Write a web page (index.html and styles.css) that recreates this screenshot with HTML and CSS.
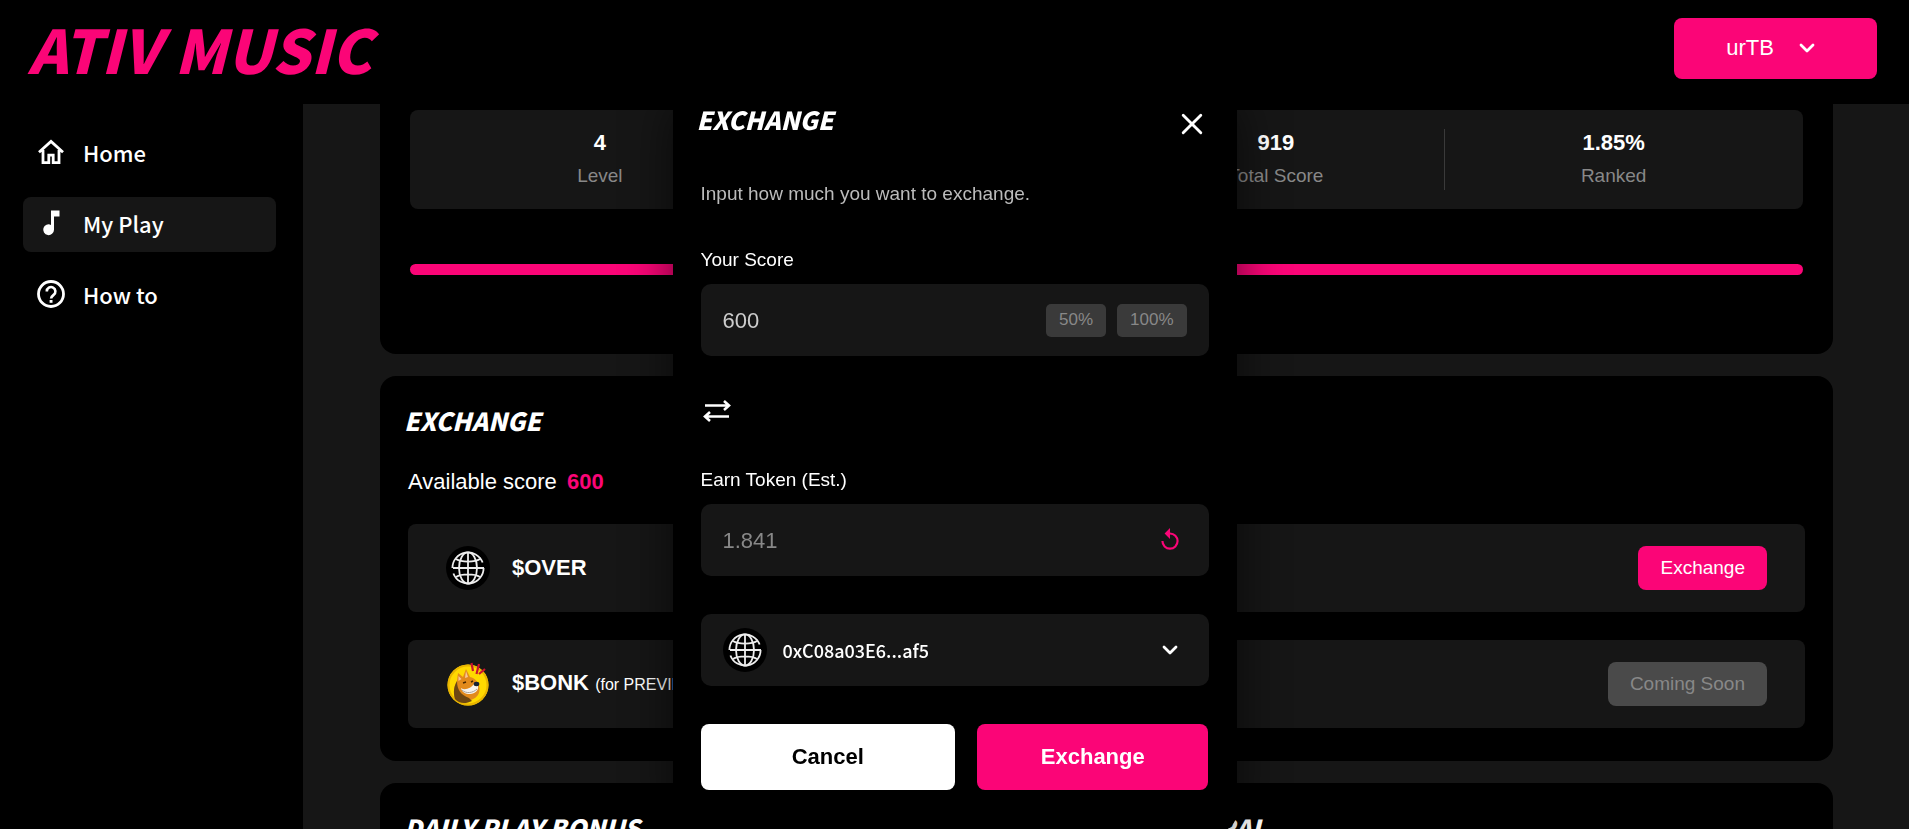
FILE: index.html
```html
<!DOCTYPE html>
<html lang="en">
<head>
<meta charset="UTF-8" />
<meta name="viewport" content="width=device-width, initial-scale=1" />
<title>ATIV MUSIC</title>
<link rel="stylesheet" href="styles.css">
</head>
<body>
<svg class="sprite" aria-hidden="true">
  <symbol id="globe" viewBox="0 0 44 44">
    <circle cx="22" cy="22" r="22" fill="#000" />
    <g fill="none" stroke="#eee" stroke-width="1.8">
      <path d="M7 22h31M36.600 16.500A15.600 15.600 0 0 0 6.400 22M7.400 27.500A15.600 15.600 0 0 0 37.600 22" />
      <ellipse cx="22" cy="22" rx="9" ry="15.600" />
      <path d="M22 6.400v31.200M10 13c3 2 7.400 2.600 12 2.600s9-.6 12-2.600M10 31c3-2 7.400-2.600 12-2.600s9 .6 12 2.600" />
    </g>
  </symbol>
  <symbol id="chevron" viewBox="0 0 16 10">
    <path d="M2 2l6 6 6-6" fill="none" stroke="#fff" stroke-width="2.800" stroke-linecap="round" stroke-linejoin="round" />
  </symbol>
</svg>

<header class="topbar">
  <a class="logo" href="#">ATIV MUSIC</a>
  <button class="account" type="button" aria-haspopup="true">
    urTB
    <svg class="chevron"><use href="#chevron" /></svg>
  </button>
</header>

<div class="layout">
  <nav class="sidebar" aria-label="Main">
    <a class="nav-item" href="#">
      <svg viewBox="0 0 28 28"><path d="M2 14.200 14 3.400l12 10.800M6 12v12.700h5.800v-7.500h4.400v7.500H22V12" fill="none" stroke="#fff" stroke-width="2.800" /></svg>
      Home
    </a>
    <a class="nav-item active" href="#" aria-current="page">
      <svg viewBox="0 0 28 28"><path d="M14 1.500h8.500v6H17v13.300a5.400 5.400 0 1 1-3-4.900z" fill="#fff" /></svg>
      My Play
    </a>
    <a class="nav-item" href="#">
      <svg viewBox="0 0 28 28"><circle cx="14" cy="14" r="12.500" fill="none" stroke="#fff" stroke-width="2.800" /><path d="M9.800 11.400a4.300 4.300 0 1 1 6.800 3.500c-1.600 1.200-2.500 1.900-2.500 3.700" fill="none" stroke="#fff" stroke-width="2.600" /><path d="M12.600 20h2.900v2.800h-2.900z" fill="#fff" /></svg>
      How to
    </a>
  </nav>

  <main class="content">
    <section class="card card-stats">
      <div class="stats">
        <div class="stat"><strong>4</strong><span>Level</span></div>
        <div class="stat"><strong>12</strong><span>Play</span></div>
        <div class="stat"><strong>919</strong><span>Total Score</span></div>
        <div class="stat"><strong>1.85%</strong><span>Ranked</span></div>
      </div>
      <div class="progress"></div>
    </section>

    <section class="card">
      <h2 class="title">EXCHANGE</h2>
      <p class="available">Available score <strong>600</strong></p>
      <div class="token">
        <svg class="token-icon"><use href="#globe" /></svg>
        <span class="token-name">$OVER</span>
        <button class="btn-small" type="button">Exchange</button>
      </div>
      <div class="token">
        <svg class="token-icon" viewBox="0 0 44 44">
          <circle cx="22" cy="23" r="20.500" fill="#ffd900" />
          <circle cx="22" cy="23" r="19.500" fill="none" stroke="#e9b400" stroke-width="2" />
          <path d="M9 37c-2-7-1-13 2-18l1-8 5 4 3-8 4 8c5 1 8 5 9 9 2 7-2 12-8 14-6 2-12 3-16-1z" fill="#e28a1c" />
          <path d="M9 37c-2-7-1-13 2-18 0 9 4 14 12 17l3 3c-6 3-13 3-17-2z" fill="#6d4713" />
          <path d="M15 26c4 3 10 0 13-4l4 2c1 4-3 8-8 8-5 0-8-2-9-6z" fill="#f7f3ee" />
          <path d="M20 9l2 6-3 1zM12.500 14l3 3-3 2z" fill="#f6c69b" />
          <path d="M16 28c4 4 11 3 15-1" fill="none" stroke="#aaa39b" />
          <ellipse cx="30.500" cy="22" rx="2.800" ry="2.200" fill="#172033" />
          <path d="M17 21l3-1M25 20l2-1" stroke="#452600" stroke-width="1.500" />
          <path d="M25.500 1l1.500 8M33 2l-2.500 10M39 7l-6 5" stroke="#c9122f" stroke-width="2.200" />
        </svg>
        <span class="token-name">$BONK <small>(for PREVIEW)</small></span>
        <button class="btn-small" type="button" disabled>Coming Soon</button>
      </div>
    </section>

    <section class="card card-split">
      <h2 class="title">DAILY PLAY BONUS</h2>
      <h2 class="title">REFERRAL</h2>
    </section>
  </main>
</div>

<div class="overlay">
  <form class="modal" role="dialog" aria-labelledby="modalTitle">
    <div class="modal-head">
      <h2 class="title" id="modalTitle">EXCHANGE</h2>
      <button class="close" type="button" aria-label="Close">
        <svg viewBox="0 0 20 20"><path d="M2 2l16 16M18 2 2 18" stroke="#fff" stroke-width="2.600" stroke-linecap="round" /></svg>
      </button>
    </div>
    <p class="hint">Input how much you want to exchange.</p>

    <label class="label" for="score">Your Score</label>
    <div class="field">
      <input id="score" type="text" value="600">
      <button class="percent" type="button">50%</button>
      <button class="percent" type="button">100%</button>
    </div>

    <svg class="swap" viewBox="0 0 32 28"><path d="M4 8.500h23M23 4l5 4.500-5 4.500M28 19.500H5M9 15l-5 4.500L9 24" fill="none" stroke="#fff" stroke-width="2.600" /></svg>

    <label class="label" for="earn">Earn Token (Est.)</label>
    <div class="field">
      <input id="earn" class="muted" type="text" value="1.841" readonly>
      <button class="reload" type="button" aria-label="Refresh">
        <svg viewBox="0 0 24 24"><path d="M12 5V1L7 6l5 5V7a6 6 0 1 1-6 6H4a8 8 0 1 0 8-8z" fill="#fb0577" /></svg>
      </button>
    </div>

    <div class="field wallet">
      <svg class="token-icon"><use href="#globe" /></svg>
      <select aria-label="Wallet">
        <option>0xC08a03E6...af5</option>
      </select>
      <svg class="chevron"><use href="#chevron" /></svg>
    </div>

    <div class="actions">
      <button class="btn cancel" type="button">Cancel</button>
      <button class="btn" type="submit">Exchange</button>
    </div>
  </form>
</div>
</body>
</html>
```
FILE: styles.css
```css
* {
  box-sizing: border-box;
}
body {
  font-family: "Liberation Sans", Arial, sans-serif;
  font-size: 19px;
  line-height: 24px;
  background: #161616;
  color: #fff;
  margin: 0;
  height: 100vh;
  overflow: hidden;
  display: flex;
  flex-direction: column;
}
h2, p {
  margin: 0;
}
button, input, select {
  font-family: inherit;
  font-size: inherit;
  color: inherit;
  border: none;
  padding: 0;
}
button {
  cursor: pointer;
}
.sprite {
  display: none;
}
.chevron {
  width: 16px;
  height: 10px;
  flex: none;
}

/* Header */
.topbar {
  flex: none;
  height: 104px;
  padding: 0 32px 8px 28px;
  background: #000;
  display: flex;
  align-items: center;
  justify-content: space-between;
}
.logo {
  font-family: "Noto Sans CJK JP", "Liberation Sans", sans-serif;
  font-size: 60px;
  line-height: 80px;
  font-weight: 900;
  font-style: italic;
  color: #fb0577;
  text-decoration: none;
}
.account {
  width: 203px;
  height: 61px;
  padding-right: 10px;
  border-radius: 8px;
  background: #fb0577;
  font-size: 22px;
  display: flex;
  align-items: center;
  justify-content: center;
  gap: 25px;
}

/* Layout */
.layout {
  flex: 1;
  min-height: 0;
  overflow: hidden;
  display: flex;
}
.sidebar {
  width: 303px;
  flex: none;
  padding: 22px 27px 0 23px;
  background: #000;
  display: flex;
  flex-direction: column;
  gap: 16px;
}
.nav-item {
  height: 55px;
  padding: 0 14px 3px;
  border-radius: 8px;
  display: flex;
  align-items: center;
  gap: 18px;
  font-family: "Noto Sans CJK JP", sans-serif;
  font-size: 22px;
  font-weight: 500;
  color: #fff;
  text-decoration: none;
}
.nav-item svg {
  width: 28px;
  height: 28px;
}
.nav-item.active {
  background: #161616;
}
.content {
  flex: 1;
  padding: 0 76px 0 77px;
  display: flex;
  flex-direction: column;
  gap: 22px;
}
.card {
  flex: none;
  background: #000;
  border-radius: 16px;
  padding: 29px 28px 33px;
}
.title {
  margin-left: -4px;
  font-family: "Noto Sans CJK JP", "Liberation Sans", sans-serif;
  font-size: 25px;
  line-height: 30px;
  font-weight: 900;
  font-style: italic;
}

/* Stats */
.card-stats {
  border-radius: 0 0 16px 16px;
  padding: 6px 30px 79px;
}
.stats {
  height: 99px;
  padding: 0 21px;
  border-radius: 8px;
  background: #161616;
  display: grid;
  grid-template-columns: repeat(4, 1fr);
  align-items: center;
}
.stat {
  height: 61px;
  padding-top: 2px;
  border-left: 1px solid #3a3a3a;
  display: flex;
  flex-direction: column;
  gap: 9px;
  text-align: center;
}
.stat:first-child {
  border-left: none;
}
.stat strong {
  font-size: 22px;
}
.stat span {
  color: #888;
}
.progress {
  height: 11px;
  margin-top: 55px;
  border-radius: 6px;
  background: #fb0577;
}

/* Exchange list */
.available {
  margin: 35px 0 30px;
  font-size: 22px;
}
.available strong {
  margin-left: 4px;
  color: #fb0577;
}
.token {
  height: 88px;
  padding: 0 38px;
  border-radius: 8px;
  background: #161616;
  display: flex;
  align-items: center;
}
.token + .token {
  margin-top: 28px;
}
.token-icon {
  width: 44px;
  height: 44px;
  flex: none;
}
.token-name {
  flex: 1;
  margin-left: 22px;
  font-size: 22px;
  font-weight: 700;
}
.token-name small {
  font-size: 16px;
  font-weight: 400;
}
.btn-small {
  height: 44px;
  padding: 0 22px;
  border-radius: 8px;
  background: #fb0577;
}
.btn-small:disabled {
  background: #4a4a4a;
  color: #888;
  cursor: default;
}
.card-split {
  display: grid;
  grid-template-columns: 1fr 1fr;
  gap: 66px;
}

/* Modal */
.overlay {
  position: fixed;
  top: 104px;
  left: 0;
  right: 0;
  display: flex;
  justify-content: center;
  clip-path: inset(0);
}
.modal {
  width: 564px;
  padding: 0 28px 42px;
  border-radius: 0 0 20px 20px;
  background: #000;
  box-shadow: 0 0 48px rgba(0, 0, 0, 0.6);
}
.modal-head {
  height: 40px;
  display: flex;
  justify-content: space-between;
}
.close {
  width: 34px;
  height: 40px;
  background: none;
}
.close svg {
  width: 22px;
  height: 22px;
  vertical-align: middle;
}
.hint {
  margin: 38px 0 42px;
  color: #bbb;
}
.label {
  display: block;
  margin-bottom: 12px;
}
.field {
  height: 72px;
  padding: 0 22px;
  border-radius: 10px;
  background: #161616;
  display: flex;
  align-items: center;
  gap: 11px;
}
.field input {
  flex: 1;
  min-width: 0;
  padding-top: 2px;
  background: none;
  font-size: 22px;
  color: #ccc;
}
.field input.muted {
  color: #888;
}
.percent {
  height: 33px;
  padding: 0 13px;
  border-radius: 5px;
  background: #3a3a3a;
  color: #888;
  font-size: 17px;
}
.swap {
  display: block;
  width: 32px;
  height: 28px;
  margin: 41px 0 43px;
}
.reload {
  width: 34px;
  height: 34px;
  background: none;
}
.reload svg {
  width: 26px;
  height: 26px;
  vertical-align: middle;
}
.wallet {
  margin: 38px 0;
  padding-right: 31px;
}
.wallet select {
  flex: 1;
  height: 44px;
  padding-left: 5px;
  appearance: none;
  background: none;
  font-family: "Noto Sans CJK JP", sans-serif;
  font-size: 18px;
  font-weight: 500;
}
.actions {
  display: grid;
  grid-template-columns: 11fr 10fr;
  gap: 22px;
}
.btn {
  height: 66px;
  border-radius: 8px;
  background: #fb0577;
  font-size: 22px;
  font-weight: 700;
}
.btn.cancel {
  background: #fff;
  color: #000;
}
```
